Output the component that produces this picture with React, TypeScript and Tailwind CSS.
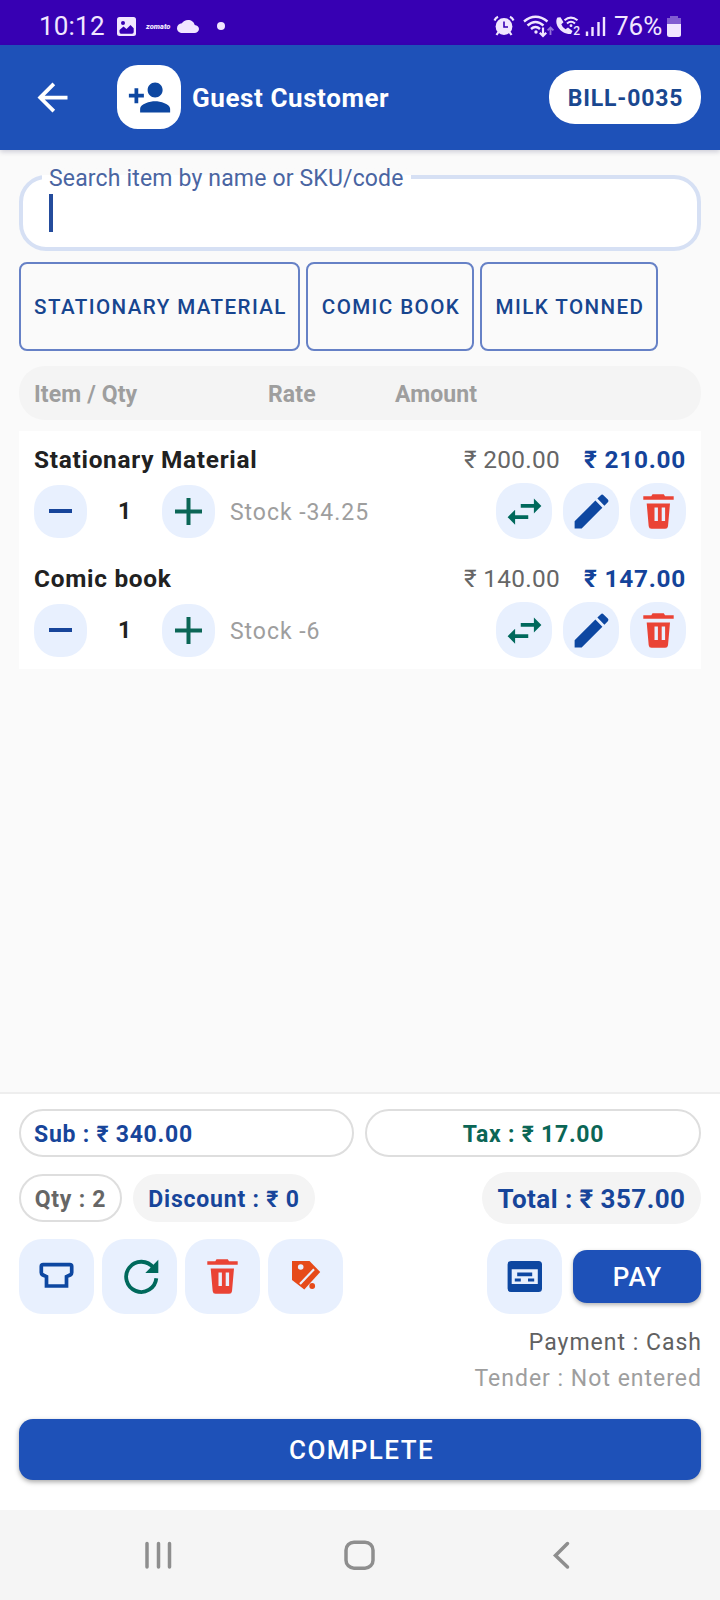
import { useState } from "react";

type IconProps = { className?: string };

const quickItems = [
  { label: "STATIONARY MATERIAL", width: "w-[281px]" },
  { label: "COMIC BOOK", width: "w-[168px]" },
  { label: "MILK TONNED", width: "w-[178px]" },
];

const initialLines = [
  { name: "Stationary Material", rate: "200.00", amount: "210.00", qty: 1, stock: "-34.25" },
  { name: "Comic book", rate: "140.00", amount: "147.00", qty: 1, stock: "-6" },
];

function TrashIcon({ className }: IconProps) {
  return (
    <svg viewBox="0 0 56 56" className={className} fill="#ea4335" fillRule="evenodd">
      <path d="M13.3 13.2H21.3L22.5 11.3H33.8L35 13.2H43.7V16.8H13.3Z" />
      <path d="M16.7 20.5H40L38 43.2Q37.6 45.7 35.2 45.7H21.5Q19 45.7 18.7 43.2ZM24.5 24.6V38H27.9V24.6ZM31.7 24.6V38H35.1V24.6Z" />
    </svg>
  );
}

function MaterialIcon({ d, className }: { d: string; className?: string }) {
  return (
    <svg viewBox="0 0 24 24" className={className} fill="currentColor">
      <path d={d} />
    </svg>
  );
}

const icons = {
  back: "M20 11H7.83l5.59-5.59L12 4l-8 8 8 8 1.41-1.41L7.83 13H20v-2z",
  personAdd:
    "M15 12c2.21 0 4-1.79 4-4s-1.79-4-4-4-4 1.79-4 4 1.79 4 4 4zm-9-2V7H4v3H1v2h3v3h2v-3h3v-2H6zm9 4c-2.67 0-8 1.34-8 4v2h16v-2c0-2.66-5.33-4-8-4z",
  swap: "M6.99 11L3 15l3.99 4v-3H14v-2H6.99v-3zM21 9l-3.99-4v3H10v2h7.01v3L21 9z",
  edit: "M3 17.25V21h3.75L17.81 9.94l-3.75-3.75L3 17.25zM20.71 7.04c.39-.39.39-1.02 0-1.41l-2.34-2.34c-.39-.39-1.02-.39-1.41 0l-1.83 1.83 3.75 3.75 1.83-1.83z",
  cloud:
    "M19.35 10.04C18.67 6.59 15.64 4 12 4 9.11 4 6.6 5.64 5.35 8.04 2.34 8.36 0 10.91 0 14c0 3.31 2.69 6 6 6h13c2.76 0 5-2.24 5-5 0-2.64-2.05-4.78-4.65-4.96z",
};

function StatusBar() {
  return (
    <div className="flex h-[45px] items-center bg-[#3700b3] pt-[7px] pl-[39px] text-[#f1e6ff]">
      <span className="w-[78px] text-[26px] leading-7 tracking-[0.2px]">10:12</span>
      <svg viewBox="0 0 19 19" className="h-[19px] w-[19px]">
        <rect width="19" height="19" rx="2.5" fill="currentColor" />
        <circle cx="6" cy="6" r="2" fill="#3700b3" />
        <path d="M2.5 13L6.5 9.5L9.5 12L13.5 8L16.7 11.2V15Q16.7 16.7 15 16.7H4Q2.5 16.7 2.5 15Z" fill="#3700b3" />
      </svg>
      <span className="ml-[10px] w-[31px] text-[7.5px] leading-[9px] font-black italic">zomato</span>
      <svg viewBox="0 4 24 16" preserveAspectRatio="none" className="h-[13px] w-[22px]" fill="currentColor">
        <path d={icons.cloud} />
      </svg>
      <span className="ml-[18px] h-2 w-2 rounded-full bg-current" />

      <svg viewBox="0 0 120 24" className="ml-[268px] h-6 w-[120px]" fill="none" stroke="currentColor">
        {/* alarm */}
        <circle cx="11" cy="12.5" r="8.4" fill="currentColor" stroke="none" />
        <path d="M5.5 18L3.5 21M16.5 18L18.5 21M1.5 6.5Q2.5 4 5 2.8M20.5 6.5Q19.5 4 17 2.8" strokeWidth="2.2" />
        <path d="M11 7.5V13H15" stroke="#3700b3" strokeWidth="1.6" />
        {/* wifi with traffic arrows */}
        <path d="M31 7.5Q42.5 -2 54.5 7.5M34.5 11.5Q42.5 4.5 50.5 11.5M38 15Q42.5 11 47 15" strokeWidth="2.4" />
        <circle cx="43" cy="18" r="1.7" fill="currentColor" stroke="none" />
        <path d="M50 13.5V22M46.8 18.8L50 22L53.2 18.8" strokeWidth="2.2" />
        <path d="M57.5 21V13.5M54.6 16.3L57.5 13.4L60.4 16.3" strokeWidth="1.8" opacity="0.5" />
        {/* wifi calling */}
        <path d="M64.5 3.5C60.5 9 67 20.5 78 20L79.5 17L75 13.5L72.5 15.2Q69.3 13.5 68.3 10.3L70.5 8.3L67.5 3.2Z" fill="currentColor" stroke="none" />
        <path d="M71.5 6.3Q77.8 0.8 84.5 6.3M74 9.5Q78 6 82 9.5" strokeWidth="2.1" />
        <circle cx="78" cy="11.7" r="1.4" fill="currentColor" stroke="none" />
        <text x="80.3" y="21.3" fontSize="12" fontWeight="500" fill="currentColor" stroke="none">2</text>
        {/* signal */}
        <path d="M94 17.5V22M99.5 13V22M105.5 8V22M111 3V22" strokeWidth="2.4" />
      </svg>
      <span className="ml-px w-[53px] text-[26px] leading-7">76%</span>
      <svg viewBox="0 0 14 21" className="h-[21px] w-[14px]" fill="currentColor">
        <path d="M3 0H11V2H14V8H0V2H3Z" opacity="0.4" />
        <path d="M0 8H14V18.5Q14 21 11.5 21H2.5Q0 21 0 18.5Z" />
      </svg>
    </div>
  );
}

function App() {
  const [lines, setLines] = useState(initialLines);

  const changeQty = (index: number, delta: number) => {
    setLines((current) =>
      current.map((line, i) =>
        i === index ? { ...line, qty: Math.max(0, line.qty + delta) } : line
      )
    );
  };

  return (
    <div className="flex h-[1600px] w-[720px] flex-col overflow-hidden bg-[#fafafa] font-[Roboto,sans-serif] text-[23px]">
      <StatusBar />

      <header className="flex h-[105px] shrink-0 items-center bg-[#1e51b8] pr-[19px] pb-px pl-[30px] text-white shadow-[0_2px_5px_rgba(0,0,60,0.18)]">
        <button className="mr-[42px] pt-px">
          <MaterialIcon d={icons.back} className="h-[45px] w-[45px]" />
        </button>
        <button className="flex h-16 w-16 items-center justify-center rounded-[21px] bg-white text-[#0d47a1]">
          <MaterialIcon d={icons.personAdd} className="h-[45px] w-[45px]" />
        </button>
        <h1 className="ml-[11px] pt-[3px] text-[26px] font-bold tracking-[0.58px]">Guest Customer</h1>
        <span className="ml-auto flex h-[54px] w-[152px] items-center justify-center rounded-[26px] bg-white pt-[5px] pl-px font-bold tracking-[0.8px] text-[#1a478f]">
          BILL-0035
        </span>
      </header>

      <main className="flex flex-1 flex-col px-[19px] pt-[25px]">
        <div className="relative h-[76px] shrink-0 rounded-[27px] border-4 border-[#d6e0f4] bg-white">
          <label className="absolute -top-[14px] left-[19px] bg-linear-to-b from-[#fafafa] from-37% to-white to-37% px-[7px] leading-7 tracking-[0.16px] text-[#4a65a2]">
            Search item by name or SKU/code
          </label>
          <span className="absolute top-[15px] left-[26px] h-[38px] w-1 bg-[#244c9c]" />
        </div>

        <div className="mt-[11px] flex gap-[6px]">
          {quickItems.map((item) => (
            <button
              key={item.label}
              className={`${item.width} h-[89px] rounded-lg border-2 border-[#6681c6] pt-px pl-[2px] text-[20.6px] font-medium tracking-[1.4px] whitespace-nowrap text-[#17458f]`}
            >
              {item.label}
            </button>
          ))}
        </div>

        <div className="mt-[15px] flex h-[54px] items-center rounded-[26px] bg-[#f4f4f4] pt-[5px] pl-[15px] font-bold tracking-[0.12px] text-[#9e9e9e]">
          <span className="w-[234px]">Item / Qty</span>
          <span className="w-[127px]">Rate</span>
          <span>Amount</span>
        </div>

        <div className="mt-[11px] bg-white px-[15px]">
          {lines.map((line, index) => (
            <div key={line.name} className="h-[119px] pt-[15px]">
              <div className="flex h-7 text-[24.4px] leading-7">
                <span className="font-bold tracking-[0.72px] text-[#212121]">{line.name}</span>
                <span className="ml-auto tracking-[0.3px] text-[#666]">₹ {line.rate}</span>
                <span className="ml-6 font-bold tracking-[0.75px] text-[#14439a]">₹ {line.amount}</span>
              </div>
              <div className="mt-[9px] flex h-14 items-center">
                <button
                  onClick={() => changeQty(index, -1)}
                  className="flex h-[53px] w-[53px] items-center justify-center rounded-[24px] bg-[#e8f0fe]"
                >
                  <span className="h-1 w-[23px] bg-[#17459a]" />
                </button>
                <span className="w-[75px] pt-[3px] text-center font-bold text-[#212121]">{line.qty}</span>
                <button
                  onClick={() => changeQty(index, 1)}
                  className="flex h-[53px] w-[53px] items-center justify-center rounded-[24px] bg-[#e8f0fe]"
                >
                  <svg viewBox="0 0 27 27" className="h-[27px] w-[27px]" stroke="#0b6656" strokeWidth="4">
                    <path d="M0 13.5H27M13.5 0V27" />
                  </svg>
                </button>
                <span className="ml-[15px] pt-[5px] tracking-[0.95px] text-[#9e9e9e]">Stock {line.stock}</span>
                <div className="ml-auto flex gap-[11px]">
                  <button className="flex h-14 w-14 items-center justify-center rounded-[25px] bg-[#e8f0fe] text-[#00695c]">
                    <MaterialIcon d={icons.swap} className="h-[45px] w-[45px]" />
                  </button>
                  <button className="flex h-14 w-14 items-center justify-center rounded-[25px] bg-[#e8f0fe] text-[#0d47a1]">
                    <MaterialIcon d={icons.edit} className="h-[45px] w-[45px]" />
                  </button>
                  <button className="h-14 w-14 rounded-[25px] bg-[#e8f0fe]">
                    <TrashIcon className="h-14 w-14" />
                  </button>
                </div>
              </div>
            </div>
          ))}
        </div>
      </main>

      <footer className="flex h-[418px] shrink-0 flex-col border-t-2 border-[#eeeeee] bg-white px-[19px] pt-[15px]">
        <div className="flex gap-[11px] font-bold">
          <div className="flex h-12 w-[335px] items-center rounded-full border-2 border-[#dedede] pt-[5px] pl-[13px] tracking-[0.75px] text-[#17459a]">
            Sub : ₹ 340.00
          </div>
          <div className="flex h-12 flex-1 items-center justify-center rounded-full border-2 border-[#dedede] pt-[5px] pl-px tracking-[0.75px] text-[#0b6656]">
            Tax : ₹ 17.00
          </div>
        </div>

        <div className="mt-[15px] flex h-[52px] items-center font-bold">
          <div className="flex h-12 w-[103px] items-center justify-center rounded-full border-2 border-[#dedede] pt-[5px] tracking-[0.75px] text-[#666]">
            Qty : 2
          </div>
          <div className="ml-[11px] flex h-12 w-[182px] items-center justify-center rounded-full bg-[#f4f4f4] pt-[5px] tracking-[0.8px] text-[#17459a]">
            Discount : ₹ 0
          </div>
          <div className="ml-auto flex h-[52px] w-[219px] items-center justify-center rounded-full bg-[#f4f4f4] pt-[3px] text-[26px] tracking-[0.45px] text-[#17459a]">
            Total : ₹ 357.00
          </div>
        </div>

        <div className="mt-[15px] flex h-[75px] items-center gap-2">
          <button className="h-[75px] w-[75px] rounded-[23px] bg-[#e8f0fe]">
            <svg viewBox="0 0 75 75" fill="none" stroke="#0d47a1" strokeWidth="3.7">
              <path d="M24.2 25.6H50.8Q52.7 25.6 52.7 27.5V33.4Q52.7 34.9 51.5 35.8L47.5 37.6V47H27.5V37.6L23.5 35.8Q22.3 34.9 22.3 33.4V27.5Q22.3 25.6 24.2 25.6Z" />
            </svg>
          </button>
          <button className="h-[75px] w-[75px] rounded-[23px] bg-[#e8f0fe]">
            <svg viewBox="0 0 75 75" fill="none">
              <path d="M54.3 39.3A15.1 15.1 0 1 1 51.5 29" stroke="#00695c" strokeWidth="3.8" />
              <path d="M56.3 20.8V34H43.3Z" fill="#00695c" />
            </svg>
          </button>
          <button className="flex h-[75px] w-[75px] items-center justify-center rounded-[23px] bg-[#e8f0fe] pr-px pb-px">
            <TrashIcon className="h-14 w-14" />
          </button>
          <button className="h-[75px] w-[75px] rounded-[23px] bg-[#e8f0fe]">
            <svg viewBox="0 0 75 75" fill="#e64a19">
              <path d="M24 22H41.5L52.2 32.9L36.3 50.4L24 41Z" />
              <circle cx="32.7" cy="28" r="2.8" fill="#e8f0fe" />
              <path d="M46 30.3L32 45" stroke="#e8f0fe" strokeWidth="2.2" />
              <circle cx="44.2" cy="47" r="2.9" />
            </svg>
          </button>
          <button className="ml-auto h-[75px] w-[75px] rounded-[23px] bg-[#e8f0fe]">
            <svg viewBox="0 0 75 75" fill="#0d47a1">
              <path fillRule="evenodd" d="M24 22H51.5Q55 22 55 25.5V49.5Q55 53 51.5 53H24Q20.6 53 20.6 49.5V25.5Q20.6 22 24 22ZM24.7 30.2V45H50.8V30.2Z" />
              <path d="M30.2 33.5H45.2V37.3H30.2ZM27.8 39.6H33.8V42.6H27.8ZM41 39.6H47.2V42.6H41Z" />
            </svg>
          </button>
          <button className="ml-[3px] h-[53px] w-32 rounded-[14px] bg-[#1e51b8] pt-px pl-px text-[26px] font-medium tracking-[1px] text-white shadow-[0_2px_4px_rgba(0,0,0,0.3)]">
            PAY
          </button>
        </div>

        <div className="mt-[11px] text-right leading-9 tracking-[1px]">
          <p className="-mr-px text-[#616161]">Payment : Cash</p>
          <p className="-mr-px text-[#9e9e9e]">Tender : Not entered</p>
        </div>

        <button className="mt-[22px] h-[61px] shrink-0 rounded-[14px] bg-[#1e51b8] pt-px pl-[3px] text-[26px] font-medium tracking-[1.4px] text-white shadow-[0_2px_5px_rgba(0,0,0,0.35)]">
          COMPLETE
        </button>
      </footer>

      <nav className="flex h-[90px] shrink-0 items-center bg-[#f5f5f5] pl-[145px]">
        <svg viewBox="0 0 428 30" className="h-[30px] w-[428px]" fill="none" stroke="#8e8e8e" strokeWidth="3.5" strokeLinecap="round">
          <path d="M2 3.5V27M13.5 3.5V27M24.5 3.5V27" />
          <rect x="201" y="2.2" width="27" height="26" rx="8" />
          <path d="M422.5 3.5L410.5 15.5L422.5 27" />
        </svg>
      </nav>
    </div>
  );
}

export default App;
